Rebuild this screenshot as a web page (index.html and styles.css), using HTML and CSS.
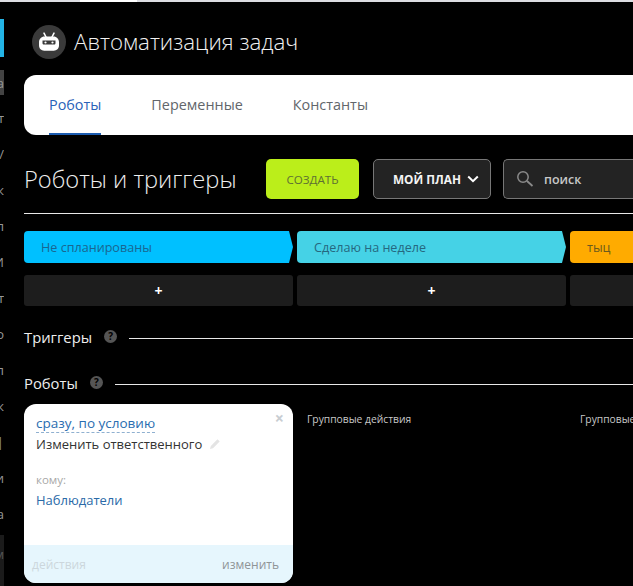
FILE: index.html
```html
<!DOCTYPE html>
<html lang="ru">
<head>
<meta charset="utf-8">
<title>Автоматизация задач</title>
<link rel="stylesheet" href="styles.css">
</head>
<body>
<div class="topstrip"><span class="strip-light"></span></div>
<div class="shell">
  <aside class="rail">
    <div class="rail-active"></div>
    <div class="rail-item rail-item-sel"><span>а</span></div>
    <div class="rail-item"><span>т</span></div>
    <div class="rail-item"><span>/</span></div>
    <div class="rail-item"><span>к</span></div>
    <div class="rail-item"><span>п</span></div>
    <div class="rail-item"><span>И</span></div>
    <div class="rail-item"><span>т</span></div>
    <div class="rail-item"><span>о</span></div>
    <div class="rail-item"><span>л</span></div>
    <div class="rail-item"><span>к</span></div>
    <div class="rail-item"><span>|</span></div>
    <div class="rail-item"><span>и</span></div>
    <div class="rail-item"><span>а</span></div>
    <div class="rail-foot"><span>м</span></div>
  </aside>
  <main class="main">
    <header class="apphead">
      <span class="applogo">
        <svg width="22" height="20" viewBox="0 0 22 20" aria-hidden="true">
          <path d="M6 1.200 8 5M16 1.200 14 5" stroke="#fff" stroke-width="1.600" stroke-linecap="round" fill="none"/>
          <path d="M6.500 4.500h9c3.200 0 5.500 2.600 5.500 5.600v3.400c0 3-2.300 5.200-5.200 5.200H6.200C3.300 18.700 1 16.500 1 13.500v-3.400c0-3 2.300-5.600 5.500-5.600z" fill="#fff"/>
          <path d="M4.500 8.500h13v2.800c0 .8-.6 1.200-1.200 1.200H5.700c-.6 0-1.200-.4-1.200-1.200z" fill="#3a3a3a"/>
          <circle cx="7.500" cy="10.500" r="1.100" fill="#fff"/>
          <circle cx="14.500" cy="10.500" r="1.100" fill="#fff"/>
        </svg>
      </span>
      <h1 class="apptitle">Автоматизация задач</h1>
    </header>
    <nav class="tabs">
      <a class="tab tab-active">Роботы</a>
      <a class="tab">Переменные</a>
      <a class="tab">Константы</a>
    </nav>
    <section class="toolbar">
      <h2 class="pagetitle">Роботы и триггеры</h2>
      <button class="btn-create">СОЗДАТЬ</button>
      <button class="btn-plan">МОЙ ПЛАН
        <svg width="12" height="8" viewBox="0 0 12 8" aria-hidden="true"><path d="M1.200 1.500 6 6.200l4.800-4.700" stroke="#fff" stroke-width="2" fill="none"/></svg>
      </button>
      <div class="search">
        <svg width="18" height="18" viewBox="0 0 18 18" aria-hidden="true"><circle cx="7" cy="7" r="5.200" stroke="#8a8a8a" stroke-width="1.500" fill="none"/><path d="m11 11 5.500 5" stroke="#8a8a8a" stroke-width="1.800" fill="none"/></svg>
        <span class="search-text">поиск</span>
      </div>
    </section>
    <div class="stages">
      <div class="stage">
        <div class="stage-head stage-blue"><span>Не спланированы</span></div>
        <button class="stage-add">+</button>
      </div>
      <div class="stage">
        <div class="stage-head stage-teal"><span>Сделаю на неделе</span></div>
        <button class="stage-add">+</button>
      </div>
      <div class="stage">
        <div class="stage-head stage-orange"><span>тыц</span></div>
        <button class="stage-add">+</button>
      </div>
    </div>
    <div class="section section-triggers">
      <span class="section-name">Триггеры</span>
      <span class="hint">?</span>
      <span class="section-line"></span>
    </div>
    <div class="section section-robots">
      <span class="section-name">Роботы</span>
      <span class="hint">?</span>
      <span class="section-line"></span>
    </div>
    <div class="columns">
      <article class="card">
        <div class="card-body">
          <span class="card-close">×</span>
          <a class="card-when">сразу, по условию</a>
          <div class="card-title">Изменить ответственного
            <svg class="card-pencil" width="12" height="12" viewBox="0 0 12 12" aria-hidden="true"><path d="M1 11l.8-3L8.500 1.300l2.200 2.200L4 10.200z" fill="#e4e4e4"/></svg>
          </div>
          <div class="card-label">кому:</div>
          <a class="card-value">Наблюдатели</a>
        </div>
        <div class="card-foot">
          <span class="card-actions">действия</span>
          <span class="card-change">изменить</span>
        </div>
      </article>
      <div class="group-col">Групповые действия</div>
      <div class="group-col">Групповые действия</div>
    </div>
  </main>
</div>
</body>
</html>
```
FILE: styles.css
```css
* { box-sizing: border-box; }
html, body { margin: 0; padding: 0; height: 100%; }
body {
  background: #000;
  color: #fff;
  font-family: "Open Sans", "Noto Sans", sans-serif;
  overflow: hidden;
  width: 633px;
  height: 586px;
}
.topstrip { height: 2px; display: flex; background: #dcdde2; }
.strip-light { width: 57px; margin-left: 80px; background: #fff; }
.shell { display: flex; height: 584px; }
.rail { width: 4px; flex: none; overflow: hidden; padding-top: 17px; display: flex; flex-direction: column; }
.rail-active { height: 38px; background: #23b4e6; flex: none; margin-bottom: 13px; }
.rail-item { height: 36px; flex: none; display: flex; align-items: center; justify-content: flex-end; font-size: 13px; color: #999; overflow: hidden; opacity: .99; }
.rail-item span { flex: none; }
.rail-item-sel { background: #444; height: 25px; margin-bottom: 5px; }
.rail-foot { flex: 1; margin-top: 3px; background: #1c1c1c; color: #555; font-size: 13px; display: flex; justify-content: flex-end; padding-top: 10px; opacity: .99; }
.main { flex: 1; min-width: 0; padding-left: 20px; overflow: hidden; }
.apphead { display: flex; align-items: center; height: 73px; gap: 8px; padding: 6px 0 0 8px; }
.applogo { width: 34px; height: 34px; border-radius: 50%; background: #3a3a3a; display: flex; align-items: center; justify-content: center; flex: none; margin-top: 1px; }
.apptitle { margin: 0; font-size: 22.300px; font-weight: 300; color: #f2f2f2; line-height: 30px; }
.tabs { display: flex; background: #fff; height: 60px; width: 640px; border-radius: 12px 0 0 12px; padding-left: 25px; gap: 50px; }
.tab { font-size: 14.400px; font-weight: 500; color: #62666b; line-height: 60px; height: 60px; }
.tab-active { color: #2a62b8; border-bottom: 2px solid #1c5cb0; }
.toolbar { display: flex; align-items: center; height: 79px; border-bottom: 1px solid #e8e8e8; width: 640px; padding-top: 10px; }
.pagetitle { margin: 0; font-size: 23.700px; font-weight: 300; color: #eee; width: 242px; flex: none; }
.btn-create { width: 93px; height: 40px; background: #bbee1a; border: 0; border-radius: 5px; font: 400 11.600px "Open Sans", sans-serif; color: #5e7033; padding: 0; flex: none; }
.btn-plan { width: 118px; height: 40px; margin-left: 14px; background: #232323; border: 1px solid #777; border-radius: 5px; color: #f4f4f4; font: 700 11.800px "Open Sans", sans-serif; display: flex; align-items: center; justify-content: center; gap: 6px; padding: 0 0 0 8px; flex: none; }
.search { width: 140px; height: 40px; margin-left: 12px; background: #232323; border: 1px solid #777; border-right: 0; border-radius: 5px 0 0 5px; display: flex; align-items: center; padding-left: 12px; gap: 10px; flex: none; }
.search-text { font-size: 12.500px; font-weight: 600; color: #c8c8c8; }
.stages { display: flex; gap: 4px; margin-top: 17px; width: 700px; }
.stage { width: 269px; flex: none; }
.stage-head { height: 32px; display: flex; align-items: center; font-size: 12.600px; font-weight: 500; padding-left: 17px; border-radius: 4px; clip-path: polygon(0 0, 265px 0, 269px 50%, 265px 100%, 0 100%); }
.stage-blue { background: #00c0ff; color: #1a6690; }
.stage-teal { background: #45d2e6; color: #256880; }
.stage-orange { background: #ffab00; color: #6b5a1e; }
.stage-add { width: 100%; height: 31px; margin-top: 12px; background: #1d1d1d; border: 0; border-radius: 3px; color: #fff; font: 700 14px "Open Sans", sans-serif; padding: 0; display: block; }
.section { display: flex; align-items: center; }
.section-triggers { margin-top: 20px; height: 24px; }
.section-robots { margin-top: 22px; height: 24px; }
.section-name { font-size: 14.800px; font-weight: 500; color: #eee; margin-top: -3px; }
.hint { width: 13px; height: 13px; border-radius: 50%; background: #555; color: #000; font-size: 10px; font-weight: 700; line-height: 13px; text-align: center; margin-left: 12px; margin-top: -3px; flex: none; }
.section-line { flex: 1; height: 1px; background: #e8e8e8; margin-left: 12px; }
.columns { display: flex; margin-top: 8px; width: 700px; }
.card { width: 269px; height: 179px; border-radius: 12px; background: #fff; overflow: hidden; display: flex; flex-direction: column; flex: none; color: #333; }
.card-body { position: relative; flex: 1; padding: 7px 12px 0; }
.card-close { position: absolute; right: 9px; top: 5px; color: #c8cdd2; font-size: 16px; font-weight: 700; line-height: 18px; }
.card-when { display: inline-block; font-size: 13.500px; color: #2a6db0; line-height: 18px; border-bottom: 1px dashed #8fb0d0; }
.card-title { font-size: 13px; color: #333; line-height: 18px; margin-top: 2px; }
.card-pencil { margin-left: 3px; vertical-align: -1px; }
.card-label { font-size: 11.500px; color: #a8a8a8; margin-top: 19px; line-height: 16px; }
.card-value { display: block; font-size: 13px; color: #2a6aa8; line-height: 18px; margin-top: 3px; }
.card-foot { height: 38px; background: #e6f6fd; display: flex; justify-content: space-between; align-items: center; padding: 0 14px 0 8px; font-size: 12px; }
.card-actions { color: #ccd6dc; }
.card-change { color: #8f9497; }
.group-col { width: 273px; flex: none; padding: 8px 0 0 14px; font-size: 10.300px; font-weight: 500; color: #c8c8c8; }
```
